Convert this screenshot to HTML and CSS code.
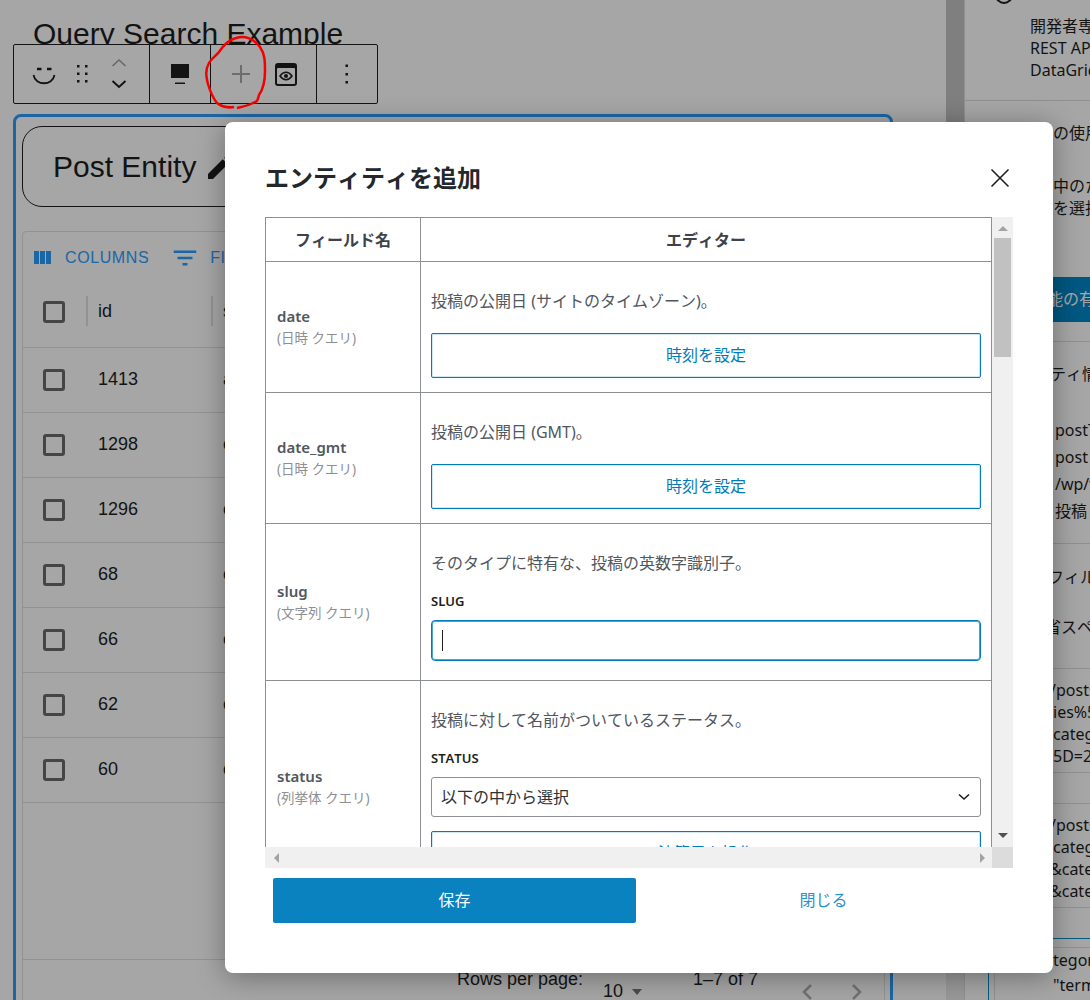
FILE: index.html
```html
<!DOCTYPE html>
<html lang="ja">
<head>
    <meta charset="UTF-8">
    <meta name="viewport" content="width=device-width, initial-scale=1.0">
    <title>エンティティを追加</title>
    <link rel="stylesheet" href="styles.css">
</head>
<body>

<div class="page">

    <!-- Editor canvas -->
    <div class="editor">
        <h2 class="post-title">Query Search Example</h2>

        <div class="block-toolbar">
            <div class="tool-group group-block">
                <svg class="ico" width="24" height="24" viewBox="0 0 24 24"><path d="M5 7h4.500M15 7h4.500" class="stroke-dark" stroke-width="2.500"/><path d="M1.500 13c2 11 19 11 21 0" class="stroke-dark" stroke-width="1.800"/></svg>
                <svg class="ico ico-dots" width="12" height="20" viewBox="0 0 12 20"><g class="fill-dark"><rect x="1" y="1" width="2.500" height="2.500"/><rect x="9" y="1" width="2.500" height="2.500"/><rect x="1" y="8.500" width="2.500" height="2.500"/><rect x="9" y="8.500" width="2.500" height="2.500"/><rect x="1" y="16" width="2.500" height="2.500"/><rect x="9" y="16" width="2.500" height="2.500"/></g></svg>
                <svg class="ico ico-mover" width="16" height="32" viewBox="0 0 16 32"><path d="M1.500 8l6.500-6 6.500 6" stroke="#a0a0a0" stroke-width="1.600" fill="none"/><path d="M1.500 23l6.500 6 6.500-6" class="stroke-dark" stroke-width="2"/></svg>
            </div>
            <div class="tool-group group-screen">
                <svg class="ico" width="18" height="20" viewBox="0 0 18 20"><rect x="0" y="0" width="18" height="14" fill="#1e1e1e"/><rect x="4" y="18.500" width="10" height="1.500" fill="#1e1e1e"/></svg>
            </div>
            <div class="tool-group group-add">
                <svg class="ico" width="18" height="18" viewBox="0 0 18 18"><path d="M9 0v18M0 9h18" stroke="#a8a8a8" stroke-width="2"/></svg>
                <svg class="ico" width="22" height="23" viewBox="0 0 22 23"><rect x="0" y="0" width="22" height="23" rx="3" fill="#1e1e1e"/><rect x="2" y="5" width="18" height="16" rx="1" fill="#fff"/><path d="M5 13c3.500-5 8.500-5 12 0-3.500 5-8.500 5-12 0z" fill="none" stroke="#1e1e1e" stroke-width="1.500"/><circle cx="11" cy="13" r="2" fill="#1e1e1e"/></svg>
            </div>
            <div class="tool-group group-more">
                <svg class="ico" width="4" height="20" viewBox="0 0 4 20"><g class="fill-dark"><rect x="0.500" y="0.500" width="2.500" height="2.500"/><rect x="0.500" y="9" width="2.500" height="2.500"/><rect x="0.500" y="17" width="2.500" height="2.500"/></g></svg>
            </div>
        </div>

        <div class="query-block">
            <div class="entity-head">
                <span>Post Entity</span>
                <svg width="32" height="32" viewBox="0 0 24 24"><path class="fill-dark" d="M3 17.250V21h3.750L17.810 9.940l-3.750-3.750L3 17.250zM20.710 7.040c.39-.39.39-1.020 0-1.410l-2.340-2.340c-.39-.39-1.020-.39-1.410 0l-1.830 1.830 3.750 3.750 1.830-1.830z"/></svg>
            </div>

            <div class="data-grid">
                <div class="grid-toolbar">
                    <svg width="24" height="24" viewBox="0 0 24 24"><path d="M10 18h5V5h-5v13zm-6 0h5V5H4v13zM16 5v13h5V5h-5z"/></svg>
                    <span class="grid-btn first">COLUMNS</span>
                    <svg width="30" height="30" viewBox="0 0 24 24"><path d="M10 18h4v-2h-4v2zM3 6v2h18V6H3zm3 7h12v-2H6v2z"/></svg>
                    <span class="grid-btn">FILTERS</span>
                </div>
                <div class="grid-row grid-head">
                    <span class="check"></span>
                    <span class="col-id">id</span>
                    <span class="col-slug">slug</span>
                </div>
                <div class="grid-row"><span class="check"></span><span>1413</span><span>about</span></div>
                <div class="grid-row"><span class="check"></span><span>1298</span><span>contact</span></div>
                <div class="grid-row"><span class="check"></span><span>1296</span><span>contact</span></div>
                <div class="grid-row"><span class="check"></span><span>68</span><span>contact</span></div>
                <div class="grid-row"><span class="check"></span><span>66</span><span>contact</span></div>
                <div class="grid-row"><span class="check"></span><span>62</span><span>contact</span></div>
                <div class="grid-row"><span class="check"></span><span>60</span><span>contact</span></div>
                <div class="grid-fill"></div>
                <div class="grid-foot">
                    <span class="rows-label">Rows per page:</span>
                    <span class="rows-value">10 <i class="rows-caret"></i></span>
                    <span class="rows-count">1–7 of 7</span>
                    <svg class="pager" width="70" height="24" viewBox="0 0 70 24"><path d="M14 5l-7 7 7 7M56 5l7 7-7 7" fill="none" stroke="#b0b0b0" stroke-width="2.500"/></svg>
                </div>
            </div>
        </div>
    </div>

    <div class="editor-scroll"><div class="editor-thumb"></div></div>

    <!-- Settings sidebar -->
    <div class="sidebar">
        <div class="side s1">
            <span class="side-ring"></span>
            <div class="at-dev">開発者専用のブロック</div>
            <div class="at-dev">REST API</div>
            <div class="at-dev">DataGrid</div>
        </div>
        <div class="side s2">
            <div class="at-53">の使用方法</div>
            <div class="at-53 mt31">中のための</div>
            <div class="at-53">を選択して</div>
            <div class="side-btn">能の有効化</div>
        </div>
        <div class="side s3">
            <div class="at-50">ティ情報</div>
            <div class="code-lines">
                <div>postType</div>
                <div>post</div>
                <div>/wp/v2/posts</div>
                <div>投稿</div>
            </div>
        </div>
        <div class="side s4">
            <div class="at-48">フィルター</div>
            <div class="at-45 mt28">省スペース</div>
        </div>
        <div class="side s5">
            <div class="at-50">/posts</div>
            <div class="at-53">ies%5B</div>
            <div class="at-53">categ</div>
            <div class="at-53">5D=25</div>
        </div>
        <div class="side s6"></div>
        <div class="side s5">
            <div class="at-50">/posts</div>
            <div class="at-53">categ</div>
            <div class="at-50">&amp;cate</div>
            <div class="at-50">&amp;cate</div>
        </div>
        <div class="s6"></div>
        <div class="side-outer">
            <div class="side-inner">
                <div class="at-tail">tegories</div>
                <div class="at-tail">"terms"</div>
            </div>
        </div>
    </div>

    <div class="overlay"></div>

    <!-- Hand drawn annotation over the add button -->
    <svg class="scribble" width="70" height="80" viewBox="0 0 70 80"><path d="M33 5c9-3 18 1 24 9 5 7 5 15 5 24 0 8-1 17-6 24-1 5-2 7-6 8-6 3-11 4-16 5M31 74c-6 1-12 0-17-4-4-5-7-12-9-19-2-8-3-14 1-21 3-5 7-7 10-11 4-6 9-12 17-14" fill="none" stroke="#f40000" stroke-width="2.500"/></svg>

    <!-- Modal -->
    <div class="modal">
        <div class="modal-head">
            <h1>エンティティを追加</h1>
            <svg width="20" height="20" viewBox="0 0 20 20"><path d="M1.500 1.500l17 17M18.500 1.500l-17 17" stroke="#1e1e1e" stroke-width="1.600"/></svg>
        </div>

        <div class="scroll-box">
            <div class="scroll-main">
                <div class="viewport">
                    <table class="fields">
                        <thead>
                            <tr class="row-head"><th class="col-name">フィールド名</th><th>エディター</th></tr>
                        </thead>
                        <tbody>
                            <tr class="row-date">
                                <td class="name-cell"><b>date</b><small>(日時 クエリ)</small></td>
                                <td class="edit-cell">
                                    <p>投稿の公開日 (サイトのタイムゾーン)。</p>
                                    <div class="out-btn">時刻を設定</div>
                                </td>
                            </tr>
                            <tr class="row-date">
                                <td class="name-cell"><b>date_gmt</b><small>(日時 クエリ)</small></td>
                                <td class="edit-cell">
                                    <p>投稿の公開日 (GMT)。</p>
                                    <div class="out-btn">時刻を設定</div>
                                </td>
                            </tr>
                            <tr class="row-slug">
                                <td class="name-cell"><b>slug</b><small>(文字列 クエリ)</small></td>
                                <td class="edit-cell">
                                    <p>そのタイプに特有な、投稿の英数字識別子。</p>
                                    <label class="field-label">SLUG</label>
                                    <div class="text-input"><span class="caret"></span></div>
                                </td>
                            </tr>
                            <tr class="row-status">
                                <td class="name-cell"><b>status</b><small>(列挙体 クエリ)</small></td>
                                <td class="edit-cell">
                                    <p>投稿に対して名前がついているステータス。</p>
                                    <label class="field-label">STATUS</label>
                                    <div class="select-box">
                                        <span>以下の中から選択</span>
                                        <svg width="12" height="8" viewBox="0 0 12 8"><path d="M1 1.500l5 4.500 5-4.500" fill="none" stroke="#1e1e1e" stroke-width="1.600"/></svg>
                                    </div>
                                    <div class="out-btn gap-small">演算子を操作</div>
                                </td>
                            </tr>
                        </tbody>
                    </table>
                </div>
                <div class="vbar">
                    <i class="arrow-up"></i>
                    <div class="vthumb"></div>
                    <i class="arrow-down"></i>
                </div>
            </div>
            <div class="hbar">
                <div class="htrack"><i class="arrow-left"></i><i class="arrow-right"></i></div>
                <div class="corner"></div>
            </div>
        </div>

        <div class="modal-foot">
            <div class="save-btn">保存</div>
            <div class="close-btn">閉じる</div>
        </div>
    </div>
</div>

</body>
</html>
```

FILE: styles.css
```css
/* General page */
body {
    margin: 0;
    font-family: "Noto Sans", "Noto Sans CJK JP", sans-serif;
    font-kerning: none;
    color: #1e1e1e;
    background: #fff;
}
.page {
    position: relative;
    width: 1090px;
    height: 1000px;
    overflow: hidden;
    display: flex;
}
.fill-dark { fill: #1e1e1e; }
.stroke-dark { stroke: #1e1e1e; fill: none; }

/* Editor canvas */
.editor {
    width: 933px;
    padding-left: 13px;
    flex: none;
    font-family: "Liberation Sans", Arial, sans-serif;
}
.post-title {
    margin: 0;
    height: 27px;
    padding: 17px 0 0 20px;
    overflow: hidden;
    font-size: 30px;
    line-height: 34px;
    font-weight: 400;
}
.block-toolbar {
    width: 363px;
    height: 58px;
    display: flex;
    background: #fff;
    border: 1px solid #1e1e1e;
    border-radius: 2px;
}
.tool-group {
    display: flex;
    align-items: center;
    border-right: 1px solid #1e1e1e;
    box-sizing: border-box;
}
.group-block { width: 136px; padding-left: 18px; }
.group-screen { width: 61px; justify-content: center; }
.group-add { width: 106px; padding-left: 21px; gap: 25px; }
.group-more { flex: 1; border-right: 0; justify-content: center; }
.ico { flex: none; }
.ico-dots { margin-left: 20px; }
.ico-mover { margin-left: 23px; }

.query-block {
    width: 880px;
    height: 900px;
    margin-top: 10px;
    padding: 9px 0 0 6px;
    box-sizing: border-box;
    border: 3px solid #2a9eff;
    border-radius: 8px;
}
.entity-head {
    width: 830px;
    height: 79px;
    padding-left: 30px;
    display: flex;
    align-items: center;
    gap: 8px;
    font-size: 30px;
    border: 1px solid #1e1e1e;
    border-radius: 20px;
}
.data-grid {
    width: 861px;
    height: 800px;
    margin-top: 24px;
    border: 1px solid #e0e0e0;
    border-radius: 4px;
    font-size: 18px;
}
.grid-toolbar {
    height: 55px;
    padding: 0 0 4px 7px;
    display: flex;
    align-items: center;
    box-sizing: border-box;
    fill: #2a9eff;
    color: #2a9eff;
}
.grid-btn {
    font-size: 16px;
    letter-spacing: .6px;
    margin-left: 10px;
}
.grid-btn.first { margin: 0 21px 0 11px; }
.grid-row {
    display: grid;
    grid-template-columns: 55px 125px 1fr;
    align-items: center;
    height: 64px;
    padding-left: 20px;
    border-bottom: 1px solid #e0e0e0;
}
.grid-row span:not(.check) { margin-top: -2px; }
.grid-head { height: 50px; padding-bottom: 10px; }
.col-id, .col-slug { position: relative; }
.col-id::before, .col-slug::before {
    content: "";
    position: absolute;
    left: -12px;
    top: -5px;
    width: 2px;
    height: 30px;
    background: #e0e0e0;
}
.check {
    width: 22px;
    height: 22px;
    box-sizing: border-box;
    border: 3px solid #6a6a6a;
    border-radius: 3px;
}
.grid-fill {
    height: 156px;
    border-bottom: 1px solid #e0e0e0;
}
.grid-foot {
    display: flex;
    padding: 9px 0 0 434px;
    line-height: 20px;
    white-space: nowrap;
}
.rows-label { width: 125px; }
.rows-value { width: 69px; margin: 12px 21px 0 21px; }
.rows-caret {
    display: inline-block;
    margin-left: 4px;
    vertical-align: 2px;
    border: 5px solid transparent;
    border-top: 6px solid #757575;
    border-bottom: 0;
}
.rows-count { width: 80px; }
.pager { margin: 11px 0 0 24px; }

.editor-scroll {
    width: 18px;
    flex: none;
    background: #ebebeb;
    border-right: 1px solid #ddd;
}
.editor-thumb { height: 500px; background: #c4c4c4; }

/* Settings sidebar */
.sidebar {
    flex: 1;
    min-width: 0;
    font-size: 16px;
    line-height: 22px;
    white-space: nowrap;
}
.side {
    position: relative;
    border-bottom: 1px solid #ddd;
    overflow: hidden;
}
.s1 { height: 85px; padding-top: 15px; }
.s2 { height: 219px; padding-top: 21px; }
.s3 { height: 180px; padding-top: 21px; }
.s4 { height: 102px; padding-top: 22px; }
.s5 { height: 93px; padding-top: 10px; }
.s6 { height: 30px; }
.at-dev { padding-left: 65px; }
.at-53 { padding-left: 88px; }
.at-50 { padding-left: 85px; }
.at-48 { padding-left: 83px; }
.at-45 { padding-left: 80px; }
.mt31 { margin-top: 31px; }
.mt28 { margin-top: 28px; }
.side-ring {
    position: absolute;
    left: 30px;
    top: -14px;
    width: 14px;
    height: 14px;
    border: 2px solid #1e1e1e;
    border-radius: 50%;
}
.side-btn {
    margin-top: 58px;
    height: 45px;
    line-height: 45px;
    padding-left: 82px;
    background: #0088c8;
    color: #fff;
}
.code-lines {
    margin-top: 32px;
    padding-left: 90px;
    line-height: 27px;
}
.side-outer {
    margin-left: 23px;
    padding: 8px 0 0 5px;
    height: 54px;
    border-top: 1px solid #0a8bc2;
    border-left: 1px solid #0a8bc2;
}
.side-inner {
    height: 60px;
    border-top: 1px solid #ddd;
    border-left: 1px solid #ddd;
    line-height: 25px;
}
.at-tail { padding-left: 58px; }

.overlay {
    position: absolute;
    inset: 0;
    background: rgba(0, 0, 0, .35);
}
.scribble {
    position: absolute;
    left: 203px;
    top: 33px;
}

/* Modal */
.modal {
    position: absolute;
    left: 225px;
    top: 122px;
    width: 828px;
    height: 851px;
    background: #fff;
    border-radius: 8px;
    box-shadow: 0 4px 28px rgba(0, 0, 0, .35);
    line-height: 22px;
}
.modal-head {
    height: 95px;
    padding: 22px 43px 6px 40px;
    display: flex;
    justify-content: space-between;
    align-items: center;
    box-sizing: border-box;
}
.modal-head h1 {
    margin: 0;
    font-size: 24px;
    line-height: 32px;
    font-weight: 700;
    color: #23282d;
}
.scroll-box {
    width: 748px;
    height: 651px;
    margin-left: 40px;
    display: flex;
    flex-direction: column;
}
.scroll-main {
    height: 630px;
    display: flex;
}
.viewport {
    width: 727px;
    overflow: hidden;
}
.fields {
    width: 727px;
    table-layout: fixed;
    border-collapse: collapse;
    font-size: 16px;
}
.fields th, .fields td {
    border: 1px solid #8c8f94;
    padding: 0;
}
.fields th {
    font-size: 16px;
    font-weight: 700;
    color: #3c434a;
    text-align: center;
}
.col-name { width: 154px; }
.row-head { height: 44px; }
.row-date { height: 131px; }
.row-slug { height: 157px; }
.row-status { height: 212px; }
.fields .name-cell {
    padding-left: 11px;
    vertical-align: middle;
}
.name-cell b {
    display: block;
    font-size: 15px;
    font-weight: 600;
    color: #50575e;
}
.name-cell small {
    display: block;
    font-size: 13.500px;
    color: #8c8f94;
}
.fields .edit-cell {
    padding: 28px 10px 0 10px;
    vertical-align: top;
}
.edit-cell p {
    margin: 0;
    color: #50575e;
    font-size: 16px;
    line-height: 22px;
}
.out-btn {
    height: 43px;
    margin-top: 21px;
    line-height: 43px;
    text-align: center;
    color: #007cba;
    border: 1px solid #007cba;
    border-radius: 2px;
    box-shadow: inset 0 0 0 1px rgba(0, 124, 186, .18);
}
.out-btn.gap-small { margin-top: 14px; }
.field-label {
    display: block;
    margin-top: 19px;
    font-size: 13px;
    line-height: 16px;
    font-weight: 600;
}
.text-input {
    display: flex;
    align-items: center;
    height: 39px;
    margin-top: 11px;
    border: 1px solid #007cba;
    border-radius: 4px;
    padding-left: 10px;
    box-shadow: inset 0 0 0 1px rgba(0, 124, 186, .7);
}
.caret {
    width: 1px;
    height: 21px;
    background: #1e1e1e;
}
.select-box {
    display: flex;
    justify-content: space-between;
    align-items: center;
    height: 38px;
    margin-top: 11px;
    padding: 0 10px 0 9px;
    border: 1px solid #8c8f94;
    border-radius: 3px;
    font-size: 16px;
    color: #2c3338;
}

/* Scrollbars */
.vbar {
    width: 21px;
    background: #f0f0f0;
    display: flex;
    flex-direction: column;
    align-items: center;
    flex: none;
    box-sizing: border-box;
}
.vthumb {
    width: 17px;
    height: 119px;
    margin-top: 7px;
    background: #c1c1c1;
}
.arrow-up, .arrow-down, .arrow-left, .arrow-right {
    display: block;
    width: 0;
    height: 0;
    border: 5px solid transparent;
}
.arrow-up {
    margin-top: 9px;
    border-top: 0;
    border-bottom-color: #a3a3a3;
}
.arrow-down {
    margin-top: auto;
    margin-bottom: 9px;
    border-bottom: 0;
    border-top-color: #505050;
}
.hbar {
    height: 21px;
    display: flex;
}
.htrack {
    flex: 1;
    background: #f0f0f0;
    display: flex;
    justify-content: space-between;
    align-items: center;
    padding: 0 7px 0 9px;
}
.arrow-left { border-left: 0; border-right-color: #a3a3a3; }
.arrow-right { border-right: 0; border-left-color: #a3a3a3; }
.corner { width: 21px; background: #dcdcdc; }

/* Footer buttons */
.modal-foot {
    display: flex;
    margin: 10px 0 0 48px;
}
.save-btn {
    width: 363px;
    height: 45px;
    line-height: 45px;
    text-align: center;
    color: #fff;
    font-size: 16px;
    background: #0a82bf;
    border-radius: 2px;
}
.close-btn {
    width: 375px;
    height: 45px;
    line-height: 45px;
    text-align: center;
    color: #2a90c9;
    font-size: 16px;
}
```
